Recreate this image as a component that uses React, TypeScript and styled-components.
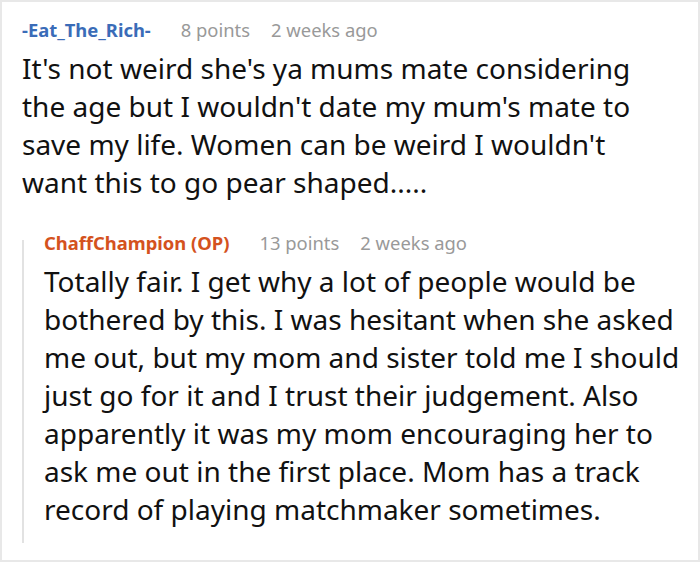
import * as React from 'react';
import styled, {createGlobalStyle} from 'styled-components';

const GlobalStyle = createGlobalStyle`
    html, body {
        margin: 0;
        padding: 0;
        background: #ffffff;
    }
    body {
        font-family: "Noto Sans", "Open Sans", sans-serif;
    }
`;

const Frame = styled.div`
    box-sizing: border-box;
    width: 700px;
    height: 562px;
    border: 2px solid #e8e8e8;
    padding: 16px 48px 0 20px;
    overflow: hidden;
    background: #fff;
`;

const Header = styled.div`
    display: flex;
    align-items: baseline;
    font-size: 18.4px;
    line-height: 24px;
    color: #999999;
    white-space: nowrap;
`;

const Author = styled.span<{$op?: boolean}>`
    font-weight: 700;
    color: ${p => (p.$op ? '#d4521e' : '#3a6cb8')};
    margin-right: 30px;
`;

const Meta = styled.span`
    margin-right: 21px;
`;

const Body = styled.div`
    font-size: 28px;
    line-height: 38px;
    color: #111111;
    margin-top: 7px;
`;

const Reply = styled.div`
    position: relative;
    margin-top: 30px;
    margin-right: -38px;
    padding-left: 22px;

    &::before {
        content: '';
        position: absolute;
        left: 0;
        top: 9px;
        bottom: -15px;
        width: 2px;
        background: #e2e2e2;
    }
`;

type CommentData = {
    author: string;
    op?: boolean;
    points: string;
    age: string;
    text: string;
};

const parent: CommentData = {
    author: '-Eat_The_Rich-',
    points: '8 points',
    age: '2 weeks ago',
    text: "It's not weird she's ya mums mate considering the age but I wouldn't date my mum's mate to save my life. Women can be weird I wouldn't want this to go pear shaped.....",
};

const reply: CommentData = {
    author: 'ChaffChampion (OP)',
    op: true,
    points: '13 points',
    age: '2 weeks ago',
    text: 'Totally fair. I get why a lot of people would be bothered by this. I was hesitant when she asked me out, but my mom and sister told me I should just go for it and I trust their judgement. Also apparently it was my mom encouraging her to ask me out in the first place. Mom has a track record of playing matchmaker sometimes.',
};

const Comment = ({comment}: {comment: CommentData}) => (
    <div>
        <Header>
            <Author $op={comment.op}>{comment.author}</Author>
            <Meta>{comment.points}</Meta>
            <Meta>{comment.age}</Meta>
        </Header>
        <Body>{comment.text}</Body>
    </div>
);

const App = () => (
    <>
        <GlobalStyle />
        <Frame>
            <Comment comment={parent} />
            <Reply>
                <Comment comment={reply} />
            </Reply>
        </Frame>
    </>
);

export default App;
